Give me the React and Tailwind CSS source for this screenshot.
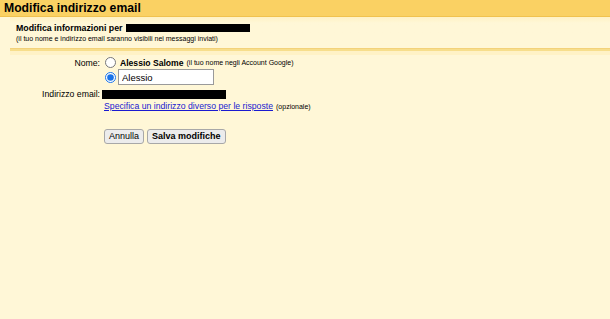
import React, { useState } from 'react';

const App = () => {
    const [choice, setChoice] = useState('custom');
    const [name, setName] = useState('Alessio');

    return (
        <div className="w-[610px] h-[319px] bg-[#fff7d7] text-black overflow-hidden" style={{ fontFamily: '"Liberation Sans", Arial, sans-serif' }}>
            <div className="h-[17px] bg-[#fad163] border-b border-[#f0c24e] px-[4px] flex items-center">
                <span className="text-[12.2px] font-bold leading-none">Modifica indirizzo email</span>
            </div>
            <div className="pl-[10px]">
                <div className="pl-[6px] pt-[5px] pb-[4px] bg-gradient-to-b from-[#fff2c4] to-[#fff7d7] to-[6px]">
                    <div className="flex items-center gap-[3px] text-[8.8px] font-bold leading-[12px]">
                        Modifica informazioni per
                        <span className="inline-block w-[124px] h-[8px] bg-black"></span>
                    </div>
                    <div className="text-[7px] leading-[10px]">(il tuo nome e indirizzo email saranno visibili nei messaggi inviati)</div>
                </div>
                <div className="h-[3px] bg-[#f7de8c] border-t border-[#f3d27a]"></div>
                <div className="h-[4px] bg-[#fff2c6]"></div>
            </div>

            <div className="grid grid-cols-[101px_1fr] text-[8.7px] leading-[12px]">
                <div className="text-right pr-[1px] pt-[2px]">Nome:</div>
                <div className="flex flex-col pt-[1px]">
                    <label className="flex items-center h-[13px]">
                        <input type="radio" name="n" checked={choice === 'google'} onChange={() => setChoice('google')} className="w-[11px] h-[11px] m-0 ml-[4px] accent-[#1a73e8]" />
                        <span className="font-bold text-[8.6px] ml-[4px]">Alessio Salome</span>
                        <span className="text-[7px] ml-[3px]">(il tuo nome negli Account Google)</span>
                    </label>
                    <label className="flex items-center h-[16px]">
                        <input type="radio" name="n" checked={choice === 'custom'} onChange={() => setChoice('custom')} className="w-[11px] h-[11px] m-0 ml-[4px] accent-[#1a73e8]" />
                        <input value={name} onChange={(e) => setName(e.target.value)} className="ml-[2px] w-[96px] h-[16px] border border-[#9a9a9a] bg-white px-[3px] text-[9.5px] outline-none" />
                    </label>
                </div>

                <div className="text-right pr-[1px] pt-[3px]">Indirizzo email:</div>
                <div className="pt-[3px] flex items-center">
                    <span className="inline-block ml-[1px] w-[124px] h-[9px] bg-black"></span>
                </div>

                <div></div>
                <div className="pl-[3px]">
                    <a href="#" className="text-[#1a1ad0] underline">Specifica un indirizzo diverso per le risposte</a>
                    <span className="text-[7px] ml-[3px]">(opzionale)</span>
                </div>

                <div></div>
                <div className="pt-[16px] pl-[3px] flex gap-[3px]">
                    <button className="h-[15px] px-[4px] text-[9px] leading-none rounded-[3px] border border-[#a8a8a8] bg-[#ececec]">Annulla</button>
                    <button className="h-[15px] px-[4px] text-[9px] font-bold leading-none rounded-[3px] border border-[#a8a8a8] bg-[#ececec]">Salva modifiche</button>
                </div>
            </div>
        </div>
    );
};

export default App;
